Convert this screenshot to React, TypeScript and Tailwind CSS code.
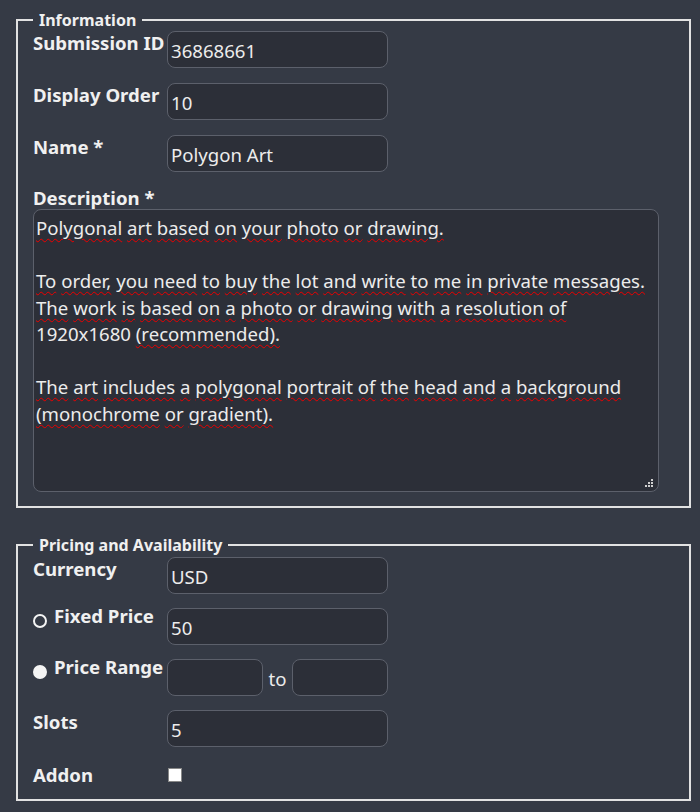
import React from "react";

const font = { fontFamily: '"Noto Sans", "Open Sans", sans-serif' };

function Field({ value, w = "w-[221px]" }: { value?: string; w?: string }) {
  return (
    <div className={`${w} flex h-[37px] items-center rounded-[8px] border border-[#5c606b] bg-[#2c2f38] pl-[3px] pt-[3px] text-[18.6px] text-[#ececec]`}>
      {value}
    </div>
  );
}

function Label({ children }: { children: React.ReactNode }) {
  return <div className="text-[18.6px] font-bold leading-[24px] text-[#f0f0f0]">{children}</div>;
}

function Radio({ checked }: { checked?: boolean }) {
  return (
    <span
      className={`mt-[6px] inline-block h-[14px] w-[14px] shrink-0 rounded-full border-2 border-[#f4f4f4] ${checked ? "bg-[#f4f4f4]" : "bg-transparent"}`}
    />
  );
}

// words flagged by the spellchecker get the red wavy line
function Sp({ children }: { children: React.ReactNode }) {
  return <span className="underline decoration-[#e00] decoration-wavy decoration-1 underline-offset-[3px]">{children}</span>;
}

function words(line: string) {
  return line.split(" ").map((w, i, a) => (
    <React.Fragment key={i}>
      {/^[\d]/.test(w) ? w : <Sp>{w}</Sp>}
      {i < a.length - 1 ? " " : ""}
    </React.Fragment>
  ));
}

const description = [
  "Polygonal art based on your photo or drawing.",
  "",
  "To order, you need to buy the lot and write to me in private messages.",
  "The work is based on a photo or drawing with a resolution of",
  "1920x1680 (recommended).",
  "",
  "The art includes a polygonal portrait of the head and a background",
  "(monochrome or gradient).",
];

export default function App() {
  return (
    <div className="min-h-[812px] bg-[#353a45] pt-[9px]" style={font}>
      {/* Information */}
      <fieldset className="ml-4 mr-[9px] border-2 border-[#e2e2e2] pb-[14px] pl-[15px] pr-[30px]">
        <legend className="ml-0 px-[6px] text-[16px] font-bold leading-[22px] text-[#f0f0f0]">Information</legend>
        <div className="grid grid-cols-[134px_221px] gap-y-[15px]">
          <Label>Submission ID</Label>
          <Field value="36868661" />
          <Label>Display Order</Label>
          <Field value="10" />
          <Label>Name *</Label>
          <Field value="Polygon Art" />
        </div>
        <div className="mt-[15px]">
          <div className="text-[18.6px] font-bold leading-[22px] text-[#f0f0f0]">Description *</div>
          <div className="relative h-[283px] w-[626px] rounded-[8px] border border-[#5c606b] bg-[#2c2f38] px-[2px] pt-[5px] text-[18.6px] leading-[26.5px] text-[#ececec]">
            {description.map((l, i) => (
              <div key={i} className="min-h-[26.5px]">{words(l)}</div>
            ))}
            <svg className="absolute bottom-[3px] right-[4px]" width="9" height="9" viewBox="0 0 9 9">
              <rect x="6" y="0" width="2" height="2" fill="#cfcfcf" />
              <rect x="3" y="3" width="2" height="2" fill="#cfcfcf" />
              <rect x="6" y="3" width="2" height="2" fill="#cfcfcf" />
              <rect x="0" y="6" width="2" height="2" fill="#cfcfcf" />
              <rect x="3" y="6" width="2" height="2" fill="#cfcfcf" />
              <rect x="6" y="6" width="2" height="2" fill="#cfcfcf" />
            </svg>
          </div>
        </div>
      </fieldset>

      {/* Pricing */}
      <fieldset className="ml-4 mr-[9px] mt-[26px] border-2 border-[#e2e2e2] pb-[12px] pl-[15px] pr-[30px]">
        <legend className="px-[6px] text-[16px] font-bold leading-[22px] text-[#f0f0f0]">Pricing and Availability</legend>
        <div className="mt-[1px] grid grid-cols-[134px_221px] gap-y-[14px]">
          <Label>Currency</Label>
          <Field value="USD" />
          <div className="flex gap-[7px]">
            <Radio />
            <div className="-mt-[4px]">
              <Label>Fixed Price</Label>
            </div>
          </div>
          <Field value="50" />
          <div className="flex gap-[7px]">
            <Radio checked />
            <div className="-mt-[4px]">
              <Label>Price Range</Label>
            </div>
          </div>
          <div className="flex items-center">
            <Field w="w-[96px]" />
            <span className="mx-[6px] pt-[3px] text-[18.6px] text-[#ececec]">to</span>
            <Field w="w-[96px]" />
          </div>
          <Label>Slots</Label>
          <Field value="5" />
          <div className="pt-[2px]">
            <Label>Addon</Label>
          </div>
          <div className="pt-[7px]">
            <span className="ml-[1px] block h-[14px] w-[14px] border border-[#888] bg-white" />
          </div>
        </div>
      </fieldset>
    </div>
  );
}
